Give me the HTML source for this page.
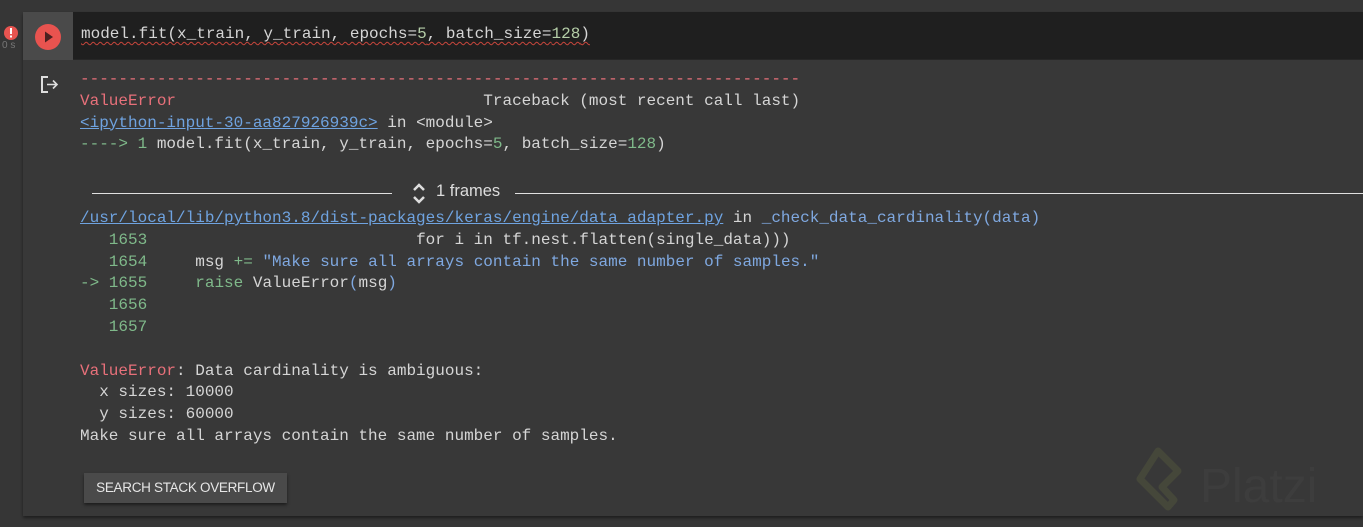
<!DOCTYPE html>
<html><head><meta charset="utf-8"><style>
html,body{margin:0;padding:0;width:1363px;height:527px;overflow:hidden;background:#363636;font-family:"Liberation Mono",monospace;}
.cell{position:absolute;left:23px;top:12px;width:1340px;height:504px;background:#383838;box-shadow:0 2px 3px rgba(0,0,0,.45);}
.gut{position:absolute;left:23px;top:12px;width:50px;height:48px;background:#4a4a4a;}
.ed{position:absolute;left:73px;top:12px;width:1290px;height:47px;background:#1f1f1f;border-bottom:1px solid #262626;}
.m{position:absolute;font-size:16px;line-height:21.8px;white-space:pre;color:#d5d5d5;}
.r{color:#e8707a}.g{color:#7fb98a}.b{color:#7fa8e0}.n{color:#b5cea8}
.lk{color:#6fa3e0;text-decoration:underline}
.sq{text-decoration:underline wavy #c8463c;text-decoration-thickness:1px;text-underline-offset:3px}
.ln{position:absolute;height:1px;background:#e0e0e0;top:193px}
.btn{position:absolute;left:84px;top:473px;width:203px;height:30px;background:#4a4a4a;color:#e6e6e6;font-family:"Liberation Sans",sans-serif;font-size:13.5px;line-height:30px;text-align:center;box-shadow:0 2px 3px rgba(0,0,0,.5);letter-spacing:-0.3px}
</style></head><body>
<div class="cell"></div>
<div class="gut"></div>
<div class="ed"></div>
<svg style="position:absolute;left:2px;top:25px" width="18" height="18"><circle cx="9" cy="8" r="7" fill="#e85450"/><rect x="8" y="3" width="2" height="6" fill="#fff"/><rect x="8" y="10.5" width="2" height="2" fill="#fff"/></svg>
<div style="position:absolute;left:2px;top:40px;font-family:'Liberation Sans',sans-serif;font-size:10px;color:#777">0 s</div>
<svg style="position:absolute;left:34px;top:23px" width="28" height="28"><circle cx="14" cy="14" r="13" fill="#e8534f"/><path d="M11 8.5 L19 14 L11 19.5Z" fill="#4a2020"/></svg>
<div class="m" style="left:81px;top:24px"><span class="sq">model.fit(x_train, y_train, epochs=<span class="n">5</span>, batch_size=<span class="n">128</span>)</span></div>
<svg style="position:absolute;left:40px;top:75px" width="22" height="20"><path d="M8 2 H2 V17 H8" stroke="#ddd" stroke-width="2" fill="none"/><path d="M7 9.5 H17 M13 5.5 L17 9.5 L13 13.5" stroke="#ddd" stroke-width="1.6" fill="none"/></svg>
<div class="m" style="left:80px;top:69px"><span class="r">---------------------------------------------------------------------------</span>
<span class="r">ValueError</span>                                Traceback (most recent call last)
<span class="lk">&lt;ipython-input-30-aa827926939c&gt;</span> in &lt;module&gt;
<span class="g">----&gt; 1</span> model.fit(x_train, y_train, epochs=<span class="g">5</span>, batch_size=<span class="g">128</span>)</div>
<div class="ln" style="left:92px;width:300px"></div>
<div class="ln" style="left:515px;width:848px"></div>
<svg style="position:absolute;left:411px;top:182px" width="16" height="24"><path d="M3 8 L8 3 L13 8" stroke="#ddd" stroke-width="2.5" fill="none"/><path d="M3 15 L8 20 L13 15" stroke="#ddd" stroke-width="2.5" fill="none"/></svg>
<div style="position:absolute;left:436px;top:182px;font-family:'Liberation Sans',sans-serif;font-size:16.5px;color:#ddd">1 frames</div>
<div class="m" style="left:80px;top:208px"><span class="lk">/usr/local/lib/python3.8/dist-packages/keras/engine/data_adapter.py</span> in <span class="b">_check_data_cardinality(data)</span>
<span class="g">   1653</span>                            for i in tf.nest.flatten(single_data)))
<span class="g">   1654</span>     msg <span class="g">+=</span> <span class="b">"Make sure all arrays contain the same number of samples."</span>
<span class="g">-&gt; 1655</span>     <span class="g">raise</span> ValueError<span class="b">(</span>msg<span class="b">)</span>
<span class="g">   1656</span>
<span class="g">   1657</span>

<span class="r">ValueError</span>: Data cardinality is ambiguous:
  x sizes: 10000
  y sizes: 60000
Make sure all arrays contain the same number of samples.</div>
<div class="btn">SEARCH STACK OVERFLOW</div>
<svg style="position:absolute;left:1120px;top:444px" width="243" height="83"><path d="M38 7 L58 27 L42 43 L54 56 L48 63 L20 35 Z" stroke="#45473a" stroke-width="7" fill="none" stroke-linejoin="round"/><text x="80" y="58" font-family="Liberation Sans,sans-serif" font-size="48" fill="#3d3d3d">Platzi</text></svg>
</body></html>
